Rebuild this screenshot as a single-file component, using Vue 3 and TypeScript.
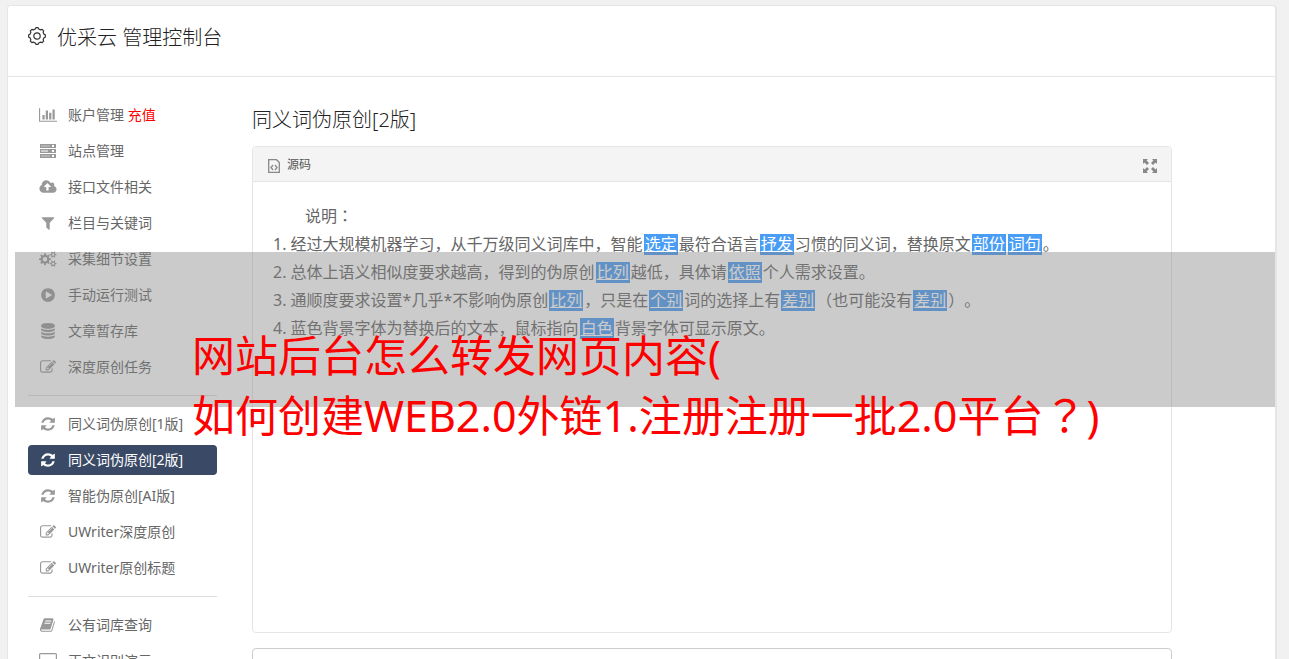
<script setup lang="ts">
interface Shape {
  box: string
  width: number
  d: string
}

interface NavItem {
  icon: string
  label: string
  extra?: string
  active?: boolean
}

interface Piece {
  text: string
  swapped?: boolean
}

function gear(cx: number, cy: number, outer: number, inner: number, teeth: number): string {
  const points: string[] = []
  const step = (Math.PI * 2) / teeth
  for (let i = 0; i < teeth; i++) {
    const parts: [number, number][] = [
      [-0.3, inner],
      [-0.17, outer],
      [0.17, outer],
      [0.3, inner],
    ]
    for (const [offset, radius] of parts) {
      const angle = (i + offset) * step
      points.push(`${(cx + radius * Math.cos(angle)).toFixed(2)} ${(cy + radius * Math.sin(angle)).toFixed(2)}`)
    }
  }
  return `M${points.join('L')}Z`
}

function hole(cx: number, cy: number, r: number): string {
  return `M${cx - r} ${cy}a${r} ${r} 0 1 0 ${r * 2} 0a${r} ${r} 0 1 0 ${-r * 2} 0Z`
}

const shapes: Record<string, Shape> = {
  chart: {
    box: '0 0 2048 1792',
    width: 18,
    d: 'M640 896v512h-256v-512h256zm384-512v1024h-256v-1024h256zm1024 1152v128h-2048v-1536h128v1408h1920zm-640-896v768h-256v-768h256zm384-384v1152h-256v-1152h256z',
  },
  server: {
    box: '0 0 16 16',
    width: 16,
    d: 'M0 1h16v4H0zM1 2.700v.6h9v-.6zM12 2v2h2V2zM0 6h16v4H0zM1 7.500v1h7v-1zM12 7v2h2V7zM0 11h16v4H0zM1 12.700v.6h9v-.6zM12 12v2h2v-2z',
  },
  upload: {
    box: '0 0 1920 1792',
    width: 18,
    d: 'M1280 864q0-14-9-23l-352-352q-9-9-23-9t-23 9l-351 351q-10 12-10 24 0 14 9 23t23 9h224v352q0 13 9.5 22.5t22.5 9.5h192q13 0 22.5-9.5t9.5-22.5v-352h224q13 0 22.5-9.5t9.5-22.5zm640 288q0 159-112.5 271.5t-271.5 112.5h-1088q-185 0-316.5-131.5t-131.5-316.5q0-130 70-240t188-165q-2-30-2-43 0-212 150-362t362-150q156 0 285.5 87t188.5 231q71-62 166-62 106 0 181 75t75 181q0 76-41 138 130 31 213.5 135.5t83.5 238.5z',
  },
  filter: {
    box: '0 0 1792 1792',
    width: 16,
    d: 'M1595 295q17 41-14 70l-493 493v742q0 42-39 59-13 5-25 5-27 0-45-19l-256-256q-19-19-19-45v-486l-493-493q-31-29-14-70 17-39 59-39h1280q42 0 59 39z',
  },
  cogs: {
    box: '0 0 18 16',
    width: 18,
    d: gear(6, 8.2, 6, 4.4, 8) + hole(6, 8.2, 2.2) + gear(14.2, 3.6, 3.3, 2.2, 6) + hole(14.2, 3.6, 1.2) + gear(14.2, 12.6, 3.3, 2.2, 6) + hole(14.2, 12.6, 1.2),
  },
  play: {
    box: '0 0 1792 1792',
    width: 16,
    d: 'M896 128q209 0 385.5 103t279.5 279.5 103 385.5-103 385.5-279.5 279.5-385.5 103-385.5-103-279.5-279.5-103-385.5 103-385.5 279.5-279.5 385.5-103zm384 823q32-18 32-55t-32-55l-544-320q-31-19-64-1-32 19-32 56v640q0 37 32 56 16 8 32 8 17 0 32-9z',
  },
  database: {
    box: '0 0 1792 1792',
    width: 16,
    d: 'M896 768q237 0 443-43t325-127v170q0 69-103 128t-280 93.5-385 34.5-385-34.5-280-93.5-103-128v-170q119 84 325 127t443 43zm0 768q237 0 443-43t325-127v170q0 69-103 128t-280 93.5-385 34.5-385-34.5-280-93.5-103-128v-170q119 84 325 127t443 43zm0-384q237 0 443-43t325-127v170q0 69-103 128t-280 93.5-385 34.5-385-34.5-280-93.5-103-128v-170q119 84 325 127t443 43zm0-1152q208 0 385 34.5t280 93.5 103 128v128q0 69-103 128t-280 93.5-385 34.5-385-34.5-280-93.5-103-128v-128q0-69 103-128t280-93.5 385-34.5z',
  },
  edit: {
    box: '0 0 1792 1792',
    width: 16,
    d: 'M888 1184l116-116-152-152-116 116v56h96v96h56zm440-720q-16-16-33 1l-350 350q-17 17-1 33t33-1l350-350q17-17 1-33zm80 594v190q0 119-84.5 203.5t-203.5 84.5h-832q-119 0-203.5-84.5t-84.5-203.5v-832q0-119 84.5-203.5t203.5-84.5h832q63 0 117 25 15 7 18 23 3 17-9 29l-49 49q-14 14-32 8-23-6-45-6h-832q-66 0-113 47t-47 113v832q0 66 47 113t113 47h832q66 0 113-47t47-113v-126q0-13 9-22l64-64q15-15 35-7t20 29zm-96-738l288 288-672 672h-288v-288zm444 132l-92 92-288-288 92-92q28-28 68-28t68 28l152 152q28 28 28 68t-28 68z',
  },
  refresh: {
    box: '0 0 1792 1792',
    width: 16,
    d: 'M1639 1056q0 5-1 7-64 268-268 434.5t-478 166.5q-146 0-282.5-55t-243.5-157l-129 129q-19 19-45 19t-45-19-19-45v-448q0-26 19-45t45-19h448q26 0 45 19t19 45-19 45l-137 137q71 66 161 102t187 36q134 0 250-65t186-179q11-17 53-117 8-23 30-23h192q13 0 22.5 9.5t9.5 22.5zm25-800v448q0 26-19 45t-45 19h-448q-26 0-45-19t-19-45 19-45l138-138q-148-137-349-137-134 0-250 65t-186 179q-11 17-53 117-8 23-30 23h-199q-13 0-22.5-9.5t-9.5-22.5v-7q65-268 270-434.5t480-166.5q146 0 284 55.5t245 156.5l130-129q19-19 45-19t45 19 19 45z',
  },
  book: {
    box: '0 0 1792 1792',
    width: 16,
    d: 'M1639 478q40 57 18 129l-275 906q-19 64-76.5 107.5t-122.5 43.5h-923q-77 0-148.5-53.5t-99.5-131.5q-24-67-2-127 0-4 3-27t4-37q1-8-3-21.5t-3-19.5q2-11 8-21t16.5-23.5 16.5-23.5q23-38 45-91.5t30-91.5q3-10 .5-30t-.5-28q3-11 17-28t17-23q21-36 42-92t25-90q1-9-2.5-32t.5-28q4-13 22-30.5t22-22.5q19-26 42.5-84.5t27.5-96.5q1-8-3-25.5t-2-26.5q2-8 9-18t18-23 17-21q8-12 16.5-30.5t15-35 16-36 19.5-32 26.5-23.5 36-11.5 47.5 5.5l-1 3q38-9 51-9h761q74 0 114 56t18 130l-274 906q-36 119-71.5 153.5t-128.5 34.5h-869q-27 0-38 15-11 16-1 43 24 70 144 70h923q29 0 56-15.5t35-41.5l300-987q7-22 5-57 38 15 59 43zm-1064 2q-4 13 2 22.5t20 9.5h608q13 0 25.5-9.5t16.5-22.5l21-64q4-13-2-22.5t-20-9.5h-608q-13 0-25.5 9.5t-16.5 22.5zm-83 256q-4 13 2 22.5t20 9.5h608q13 0 25.5-9.5t16.5-22.5l21-64q4-13-2-22.5t-20-9.5h-608q-13 0-25.5 9.5t-16.5 22.5z',
  },
  desktop: {
    box: '0 0 18 16',
    width: 18,
    d: 'M1.500 0h15a1.500 1.500 0 0 1 1.500 1.500v10a1.500 1.500 0 0 1-1.500 1.500H11v2h1v1H6v-1h1v-2H1.500A1.500 1.500 0 0 1 0 11.500v-10A1.500 1.500 0 0 1 1.500 0zM1.200 1.300v9.200h15.600V1.300z',
  },
}

const groups: NavItem[][] = [
  [
    { icon: 'chart', label: '账户管理', extra: '充值' },
    { icon: 'server', label: '站点管理' },
    { icon: 'upload', label: '接口文件相关' },
    { icon: 'filter', label: '栏目与关键词' },
    { icon: 'cogs', label: '采集细节设置' },
    { icon: 'play', label: '手动运行测试' },
    { icon: 'database', label: '文章暂存库' },
    { icon: 'edit', label: '深度原创任务' },
  ],
  [
    { icon: 'refresh', label: '同义词伪原创[1版]' },
    { icon: 'refresh', label: '同义词伪原创[2版]', active: true },
    { icon: 'refresh', label: '智能伪原创[AI版]' },
    { icon: 'edit', label: 'UWriter深度原创' },
    { icon: 'edit', label: 'UWriter原创标题' },
  ],
  [
    { icon: 'book', label: '公有词库查询' },
    { icon: 'desktop', label: '正文识别演示' },
  ],
]

const notes: Piece[][] = [
  [
    { text: '经过大规模机器学习，从千万级同义词库中，智能' },
    { text: '选定', swapped: true },
    { text: '最符合语言' },
    { text: '抒发', swapped: true },
    { text: '习惯的同义词，替换原文' },
    { text: '部份', swapped: true },
    { text: '词句', swapped: true },
    { text: '。' },
  ],
  [
    { text: '总体上语义相似度要求越高，得到的伪原创' },
    { text: '比列', swapped: true },
    { text: '越低，具体请' },
    { text: '依照', swapped: true },
    { text: '个人需求设置。' },
  ],
  [
    { text: '通顺度要求设置*几乎*不影响伪原创' },
    { text: '比列', swapped: true },
    { text: '，只是在' },
    { text: '个别', swapped: true },
    { text: '词的选择上有' },
    { text: '差别', swapped: true },
    { text: '（也可能没有' },
    { text: '差别', swapped: true },
    { text: '）。' },
  ],
  [
    { text: '蓝色背景字体为替换后的文本，鼠标指向' },
    { text: '白色', swapped: true },
    { text: '背景字体可显示原文。' },
  ],
]

const headerGear = gear(9, 9, 8.4, 7.2, 8)
</script>

<template>
  <div class="page">
    <div class="card">
      <header class="top">
        <svg class="top-icon" viewBox="0 0 18 18" aria-hidden="true">
          <path :d="headerGear" />
          <circle cx="9" cy="9" r="3.2" />
        </svg>
        <h1>优采云 管理控制台</h1>
      </header>

      <div class="body">
        <nav class="side">
          <ul v-for="(group, g) in groups" :key="g" class="group">
            <li v-for="item in group" :key="item.label">
              <a href="#" class="item" :class="{ active: item.active }">
                <span class="icon">
                  <svg :viewBox="shapes[item.icon].box" :width="shapes[item.icon].width" height="16" aria-hidden="true">
                    <path :d="shapes[item.icon].d" />
                  </svg>
                </span>
                <span>{{ item.label }}<span v-if="item.extra" class="extra">&nbsp;{{ item.extra }}</span></span>
              </a>
            </li>
          </ul>
        </nav>

        <main class="main">
          <h2>同义词伪原创[2版]</h2>
          <section class="editor">
            <div class="toolbar">
              <button type="button" class="source">
                <svg viewBox="0 0 12 14" width="12" height="14" aria-hidden="true">
                  <path d="M.7.7h7.800l2.800 2.800v9.800H.7z" />
                  <path d="M5 6L3 8.500 5 11M7 6l2 2.500L7 11" />
                </svg>
                <span>源码</span>
              </button>
              <button type="button" class="expand" aria-label="全屏">
                <svg viewBox="0 0 14 14" width="14" height="14" aria-hidden="true">
                  <path d="M0 0h5L3.600 1.500 6 4 4 6 1.500 3.600 0 5zM14 0v5l-1.500-1.400L10 6 8 4l2.400-2.500L9 0zM0 14V9l1.500 1.400L4 8l2 2-2.400 2.500L5 14zM14 14H9l1.400-1.500L8 10l2-2 2.500 2.400L14 9z" />
                </svg>
              </button>
            </div>
            <div class="content">
              <p>说明<span class="centered">：</span></p>
              <ol>
                <li v-for="(note, n) in notes" :key="n"><template v-for="(piece, p) in note" :key="p"><mark v-if="piece.swapped">{{ piece.text }}</mark><template v-else>{{ piece.text }}</template></template></li>
              </ol>
            </div>
          </section>
          <textarea class="result" aria-label="结果"></textarea>
        </main>
      </div>
    </div>

    <div class="shade"></div>
    <div class="caption">网站后台怎么转发网页内容(<br />如何创建WEB2.0外链1.注册注册一批2.0平台<span class="centered">？</span>)</div>
  </div>
</template>

<style>
body {
  margin: 0;
  background: #f1f1f1;
}
</style>

<style scoped>
.page {
  position: relative;
  box-sizing: border-box;
  height: 100vh;
  padding: 5px 12px 0 7px;
  overflow: hidden;
  background: #f1f1f1;
  color: #666;
  font-family: "Noto Sans", "Noto Sans CJK SC", sans-serif;
  font-size: 14px;
  text-spacing-trim: space-all;
}

.centered {
  font-family: "Noto Sans CJK TC", sans-serif;
  line-height: 1;
}

.card {
  min-height: 100vh;
  border: 1px solid #e5e5e5;
  border-right-width: 2px;
  border-radius: 4px;
  background: #fff;
}

.top {
  display: flex;
  align-items: center;
  gap: 11px;
  padding: 17px 20px 23px;
  border-bottom: 1px solid #e5e5e5;
  color: #333;
}

.top-icon {
  width: 18px;
  height: 18px;
  margin-bottom: 4px;
  fill: none;
  stroke: #333;
  stroke-width: 1.2;
  stroke-linejoin: round;
}

h1,
h2 {
  margin: 0;
  color: #222;
  font-size: 20px;
  font-weight: 300;
  line-height: 30px;
}

.body {
  display: flex;
  gap: 35px;
  padding: 23px 103px 0 20px;
}

.side {
  flex: 0 0 189px;
}

.group {
  margin: 0;
  padding: 0;
  list-style: none;
}

.group + .group {
  margin-top: 13px;
  padding-top: 13px;
  border-top: 1px solid #ddd;
}

.item {
  display: flex;
  align-items: center;
  gap: 10px;
  margin-bottom: 6px;
  padding-left: 10px;
  border-radius: 4px;
  color: #666;
  line-height: 30px;
  text-decoration: none;
  white-space: nowrap;
}

.icon {
  display: flex;
  flex: 0 0 20px;
  justify-content: center;
}

.icon svg {
  fill: #999;
  fill-rule: evenodd;
}

.extra {
  color: #f00;
}

.active {
  background: #3a4a66;
  color: #fff;
}

.active svg {
  fill: #fff;
}

.main {
  flex: 1;
  min-width: 0;
  padding-top: 5px;
}

.editor {
  margin: 11px 0 15px;
  border: 1px solid #e5e5e5;
  border-radius: 4px;
}

.toolbar {
  display: flex;
  align-items: center;
  justify-content: space-between;
  height: 34px;
  padding: 0 14px 0 15px;
  border-bottom: 1px solid #e5e5e5;
  border-radius: 4px 4px 0 0;
  background: #f4f4f4;
}

button {
  display: flex;
  align-items: center;
  padding: 0;
  border: 0;
  background: none;
  color: #555;
  font: inherit;
  font-size: 12px;
}

.source {
  gap: 7px;
}

.source svg {
  margin-top: 4px;
  fill: none;
  stroke: #888;
  stroke-width: 1.3;
}

.expand svg {
  margin-top: 4px;
  fill: #888;
}

.content {
  min-height: 430px;
  padding: 20px 20px 0;
  font-size: 16px;
  line-height: 28px;
}

.content p {
  margin: 0;
  text-indent: 2em;
}

.content ol {
  margin: 0;
  padding: 0;
  list-style-position: inside;
}

mark {
  display: inline-block;
  margin: 0 1px;
  padding: 0 1px;
  background: #4a9df5;
  color: #fff;
  line-height: 21px;
  text-decoration: underline;
}

.result {
  display: block;
  box-sizing: border-box;
  width: 100%;
  height: 120px;
  border: 1px solid #ccc;
  border-radius: 4px;
  resize: none;
}

.shade {
  position: absolute;
  top: 252px;
  right: 14px;
  left: 15px;
  height: 155px;
  background: rgba(131, 131, 131, 0.42);
}

.caption {
  position: absolute;
  top: 326px;
  left: 192px;
  color: #f00;
  font-size: 43px;
  line-height: 60px;
  white-space: nowrap;
}
</style>
